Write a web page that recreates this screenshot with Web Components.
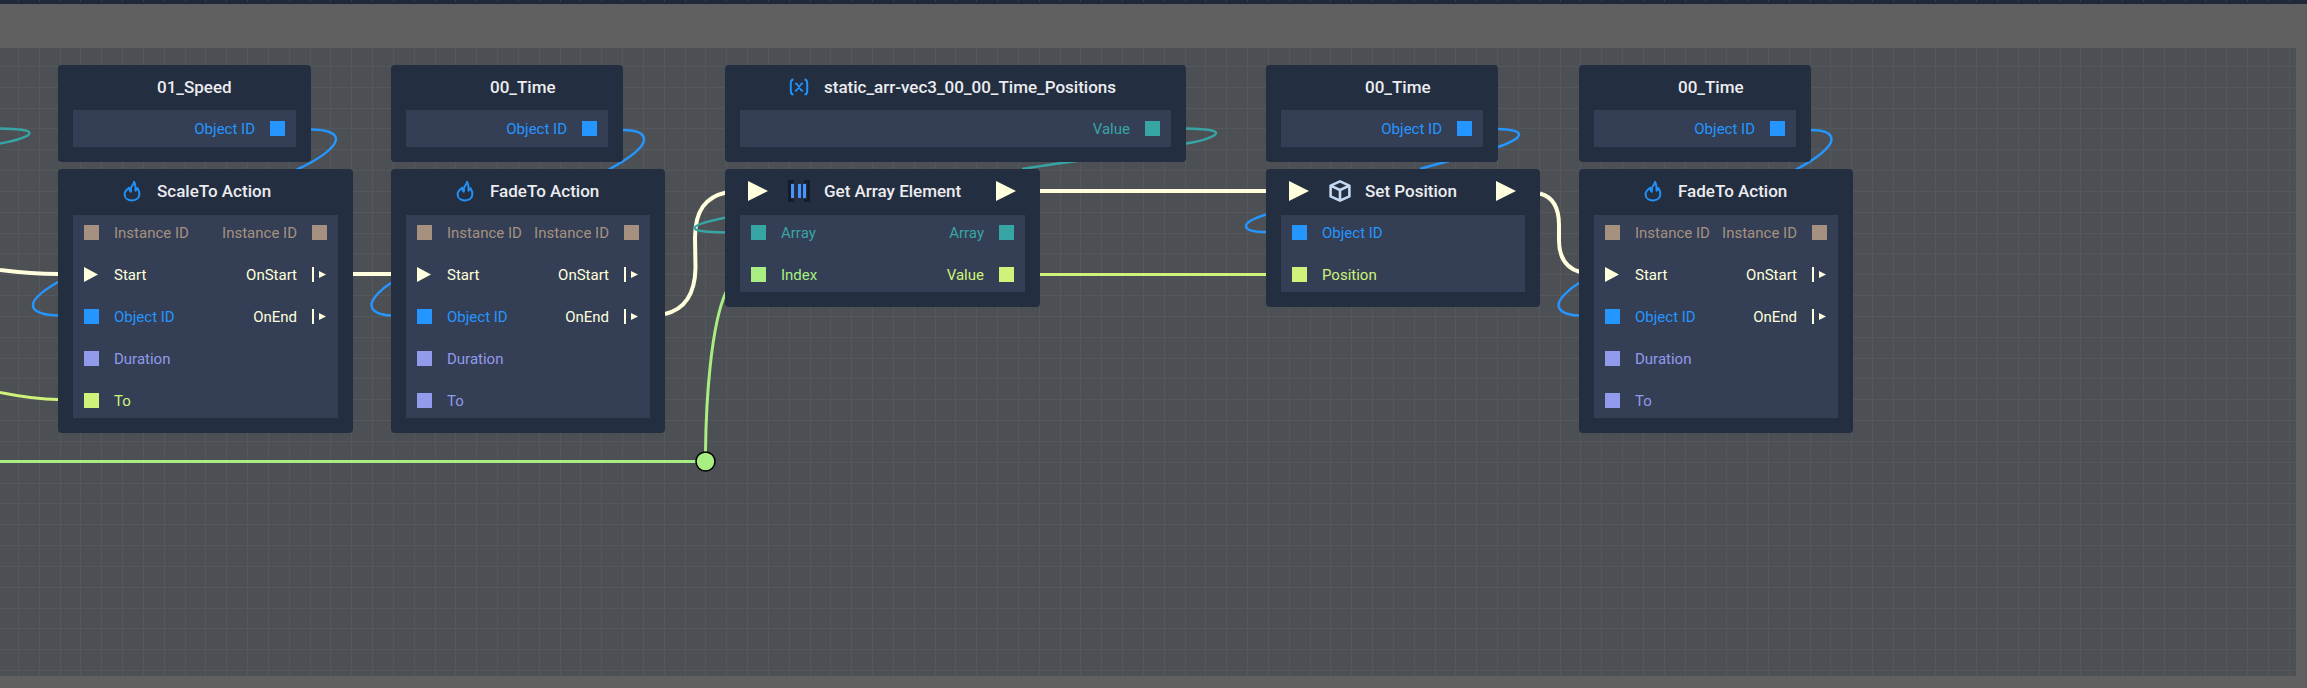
<!DOCTYPE html>
<html lang="en">
<head>
<meta charset="utf-8">
<title>Node graph</title>
<style>
  html, body { height: 100%; margin: 0; }
  body { background: #606060; font-family: Roboto, "Liberation Sans", sans-serif; overflow: hidden; }
</style>
</head>
<body>
<graph-canvas>
  <graph-wires></graph-wires>

  <graph-node compact heading="01_Speed" style="left:58px;top:65px;width:253px">
    <node-port slot="out" kind="object">Object ID</node-port>
  </graph-node>
  <graph-node heading="ScaleTo Action" icon="flame" style="left:58px;top:169px;width:295px">
    <node-port slot="in" kind="instance">Instance ID</node-port>
    <node-port slot="in" kind="exec">Start</node-port>
    <node-port slot="in" kind="object">Object ID</node-port>
    <node-port slot="in" kind="float">Duration</node-port>
    <node-port slot="in" kind="vector">To</node-port>
    <node-port slot="out" kind="instance">Instance ID</node-port>
    <node-port slot="out" kind="event">OnStart</node-port>
    <node-port slot="out" kind="event">OnEnd</node-port>
  </graph-node>

  <graph-node compact heading="00_Time" style="left:391px;top:65px;width:232px">
    <node-port slot="out" kind="object">Object ID</node-port>
  </graph-node>
  <graph-node heading="FadeTo Action" icon="flame" style="left:391px;top:169px;width:274px">
    <node-port slot="in" kind="instance">Instance ID</node-port>
    <node-port slot="in" kind="exec">Start</node-port>
    <node-port slot="in" kind="object">Object ID</node-port>
    <node-port slot="in" kind="float">Duration</node-port>
    <node-port slot="in" kind="float">To</node-port>
    <node-port slot="out" kind="instance">Instance ID</node-port>
    <node-port slot="out" kind="event">OnStart</node-port>
    <node-port slot="out" kind="event">OnEnd</node-port>
  </graph-node>

  <graph-node compact heading="static_arr-vec3_00_00_Time_Positions" icon="variable" style="left:725px;top:65px;width:461px">
    <node-port slot="out" kind="array">Value</node-port>
  </graph-node>
  <graph-node flow heading="Get Array Element" icon="array" style="left:725px;top:169px;width:315px">
    <node-port slot="in" kind="array">Array</node-port>
    <node-port slot="in" kind="integer">Index</node-port>
    <node-port slot="out" kind="array">Array</node-port>
    <node-port slot="out" kind="vector">Value</node-port>
  </graph-node>

  <graph-node compact heading="00_Time" style="left:1266px;top:65px;width:232px">
    <node-port slot="out" kind="object">Object ID</node-port>
  </graph-node>
  <graph-node flow heading="Set Position" icon="cube" style="left:1266px;top:169px;width:274px">
    <node-port slot="in" kind="object">Object ID</node-port>
    <node-port slot="in" kind="vector">Position</node-port>
  </graph-node>

  <graph-node compact heading="00_Time" style="left:1579px;top:65px;width:232px">
    <node-port slot="out" kind="object">Object ID</node-port>
  </graph-node>
  <graph-node heading="FadeTo Action" icon="flame" style="left:1579px;top:169px;width:274px">
    <node-port slot="in" kind="instance">Instance ID</node-port>
    <node-port slot="in" kind="exec">Start</node-port>
    <node-port slot="in" kind="object">Object ID</node-port>
    <node-port slot="in" kind="float">Duration</node-port>
    <node-port slot="in" kind="float">To</node-port>
    <node-port slot="out" kind="instance">Instance ID</node-port>
    <node-port slot="out" kind="event">OnStart</node-port>
    <node-port slot="out" kind="event">OnEnd</node-port>
  </graph-node>
</graph-canvas>

<script>
function attach(el, html) {
  const t = document.createElement('template');
  t.innerHTML = html;
  el.attachShadow({ mode: 'open' }).appendChild(t.content.cloneNode(true));
}

const ICONS = {
  flame: `<svg width="22" height="22" viewBox="0 0 22 22" fill="none" stroke="#2390f5" stroke-width="2" stroke-linejoin="round" stroke-linecap="round">
    <path d="M13 1.800C12.800 4.600 10.400 5.800 10 8.200C9.800 9.400 10.200 10.600 9.800 11.800C8.700 11 8.200 9.600 8.100 7.800C5.300 9.600 3.600 11.400 3.600 14.200C3.600 18 6.800 20.400 11 20.400C15.600 20.400 18.400 17.600 18.400 13.800C18.400 11.300 17.400 9.600 16.400 8C16 9.200 15.300 10 14.500 10.600C14.600 7 14.600 4 13 1.800Z"/></svg>`,
  variable: `<svg width="22" height="22" viewBox="0 0 22 22" fill="none" stroke="#2390f5" stroke-width="2">
    <path d="M5.500 3.500C3 3.500 2.800 5 2.800 7V15C2.800 17 3 18.500 5.500 18.500M16.500 3.500C19 3.500 19.200 5 19.200 7V15C19.200 17 19 18.500 16.500 18.500"/>
    <path stroke-width="1.700" d="M7 7.600H8.600L13.400 14.600H15.200M15 7.600H13.600L8.400 14.600H6.800"/></svg>`,
  array: `<svg width="22" height="22" viewBox="0 0 22 22">
    <path fill="#151c27" d="M0 0H6V3H3V19H6V22H0ZM22 0H16V3H19V19H16V22H22Z"/>
    <path fill="#4793ff" d="M3 4H6V18H3ZM10 4H13V18H10ZM15 4H18V18H15Z"/></svg>`,
  cube: `<svg width="22" height="22" viewBox="0 0 22 22" fill="none" stroke="#c3d9f3" stroke-width="2.600" stroke-linejoin="round">
    <path d="M11 1.400L20.400 5.600V16.400L11 20.600L1.600 16.400V5.600ZM1.600 5.600L11 10L20.400 5.600M11 10V20.600"/></svg>`
};

customElements.define('graph-canvas', class extends HTMLElement {
  constructor() {
    super();
    const at = [0, 21, 42, 62, 83, 104];
    const cols = at.map(v => `<rect x="${v}" width="1" height="125"/>`).join('');
    const rows = at.map(v => `<rect y="${v}" width="125" height="1"/>`).join('');
    attach(this, `
      <style>
        :host { display: flex; flex-direction: column; position: relative; height: 100%; overflow: hidden; }
        .edge { flex: none; height: 4px; background: #1f293a; }
        .frame { flex: 1; display: flex; border: solid #606060; border-width: 44px 11px 12px 0; background: #4c4f53; }
        svg { display: block; width: 100%; height: 100%; }
      </style>
      <div class="edge"><svg aria-hidden="true">
        <defs><pattern id="t" x="18" y="0" width="125" height="4" patternUnits="userSpaceOnUse" fill="#333d4b">
          ${at.map(v => `<rect x="${v}" width="1" height="2"/>`).join('')}</pattern></defs>
        <rect width="100%" height="100%" fill="url(#t)"/></svg></div>
      <div class="frame"><svg aria-hidden="true">
        <defs><pattern id="g" x="18" y="18" width="125" height="125" patternUnits="userSpaceOnUse" fill="#54575b">${cols}${rows}</pattern></defs>
        <rect width="100%" height="100%" fill="url(#g)"/></svg></div>
      <slot></slot>`);
  }
});

customElements.define('graph-wires', class extends HTMLElement {
  constructor() {
    super();
    attach(this, `
      <style>
        :host { display: block; position: absolute; inset: 0; }
        svg { display: block; width: 100%; height: 100%; fill: none; }
        .exec { stroke: #ffffdd; stroke-width: 4; }
        .object { stroke: #2596ff; stroke-width: 2.500; }
        .array { stroke: #38a5a5; stroke-width: 2.500; }
        .vector { stroke: #cff37a; stroke-width: 3; }
        .integer { stroke: #a8ee82; stroke-width: 3; }
        .joint { fill: #a8ee82; stroke: #000; stroke-width: 1.500; }
      </style>
      <svg aria-hidden="true">
        <g class="exec">
          <path d="M0 270C20 272.500 40 274 58 274"/>
          <path d="M353 274H391"/>
          <path d="M665 314C686 309 695 293 695.500 268L695 238C695 210 706 197 726 192.500"/>
          <path d="M1040 191H1266"/>
          <path d="M1540 193.500C1553 197 1559 208 1559 225V240C1559 257 1566 268 1580 272"/>
        </g>
        <g class="vector">
          <path d="M0 392.500C20 396.500 38 399.500 58 399.500"/>
          <path d="M1040 274.500H1266"/>
        </g>
        <g class="integer">
          <path d="M0 461.500H700"/>
          <path d="M705.500 452C706 400 711 325 726 292"/>
        </g>
        <circle class="joint" cx="705.500" cy="461.500" r="9.500"/>
        <g class="array">
          <path d="M0 128.500C18 129 29.500 130 29.500 133C29.500 136.500 15 141 0 143.500"/>
          <path d="M1186 128.500C1204 129 1216 130 1216 133C1216 136.500 1202 141 1186 143.500C1146 153 1070 161 1022 169"/>
          <path d="M726 217.500C709 221 694.500 225 694.500 228C694.500 231 707 232 726 232.500"/>
        </g>
        <g class="object">
          <path d="M311 129.500C326 129.500 336 133 336 139C336 147 320 159 296 170"/>
          <path d="M58 282C46 289 33 298 33 305C33 312 44 315 58 315.500"/>
          <path d="M623 130C636 130 644 133 644 139.500C644 147 630 158 608 170"/>
          <path d="M391 283C381 289 371.500 299 371.500 305C371.500 311 379 315 391 315.500"/>
          <path d="M1498 129C1511 129.500 1519 131 1519 134.500C1519 138 1510 143 1498 147C1480 154 1446 161 1420 169"/>
          <path d="M1266 214.500C1255 218 1246 222 1246 226C1246 230 1254 232 1266 232"/>
          <path d="M1811 130C1824 130 1831.500 133 1831.500 139.500C1831.500 147 1816 159 1795 170"/>
          <path d="M1579 283C1569 289 1558.500 299 1558.500 305C1558.500 311 1566 315 1579 315.500"/>
        </g>
      </svg>`);
  }
});

customElements.define('graph-node', class extends HTMLElement {
  constructor() {
    super();
    const flow = this.hasAttribute('flow');
    const arrow = flow ? '<svg width="20" height="20" viewBox="0 0 20 20"><path fill="#ffffdd" d="M0 0L20 10L0 20Z"/></svg>' : '';
    attach(this, `
      <style>
        :host { display: block; position: absolute; box-sizing: border-box;
          padding: 0 15px 15px; background: #232f41; border-radius: 4px; }
        header { display: flex; align-items: center; height: 44px; margin: 0 -15px 2px; padding: 0 24px 0 23px; }
        :host([compact]) header { margin-bottom: 1px; }
        .flow, .icon { flex: none; display: flex; }
        .flow { width: 20px; }
        .icon { width: 22px; height: 22px; margin: 0 14px 0 20px; }
        .end { margin-left: auto; }
        svg { display: block; }
        h2 { margin: 0; font-size: 17px; line-height: 20px; font-weight: 500; color: #ececf0; white-space: nowrap; }
        .ports { display: flex; justify-content: space-between; padding: 10px 11px; background: #343f55; }
        :host([compact]) .ports { padding: 11px; }
        .col { display: flex; flex-direction: column; gap: 27px; }
      </style>
      <header>
        <span class="flow">${arrow}</span>
        <span class="icon">${ICONS[this.getAttribute('icon')] || ''}</span>
        <h2>${this.getAttribute('heading')}</h2>
        ${flow ? `<span class="flow end">${arrow}</span>` : ''}
      </header>
      <div class="ports">
        <div class="col"><slot name="in"></slot></div>
        <div class="col"><slot name="out"></slot></div>
      </div>`);
  }
});

const KINDS = { object: '#2596ff', instance: '#a69180', exec: '#ffffdd', event: '#ffffdd',
  float: '#929aec', vector: '#cff37a', array: '#38a5a5', integer: '#a8ee82' };
const SHAPES = {
  exec: '<path d="M0 0L14 7.500L0 15Z"/>',
  event: '<path d="M0 0H2V15H0ZM7 4L14 7.500L7 11Z"/>'
};

customElements.define('node-port', class extends HTMLElement {
  constructor() {
    super();
    const kind = this.getAttribute('kind');
    attach(this, `
      <style>
        :host { display: flex; align-items: center; gap: 15px; height: 15px; color: ${KINDS[kind]};
          font-size: 15px; line-height: 17px; white-space: nowrap; }
        :host([slot="out"]) { flex-direction: row-reverse; }
        svg { flex: none; display: block; fill: currentColor; }
        span { padding-top: 2px; }
      </style>
      <svg width="15" height="15" viewBox="0 0 15 15" aria-hidden="true">${SHAPES[kind] || '<path d="M0 0H15V15H0Z"/>'}</svg>
      <span><slot></slot></span>`);
  }
});
</script>
</body>
</html>
